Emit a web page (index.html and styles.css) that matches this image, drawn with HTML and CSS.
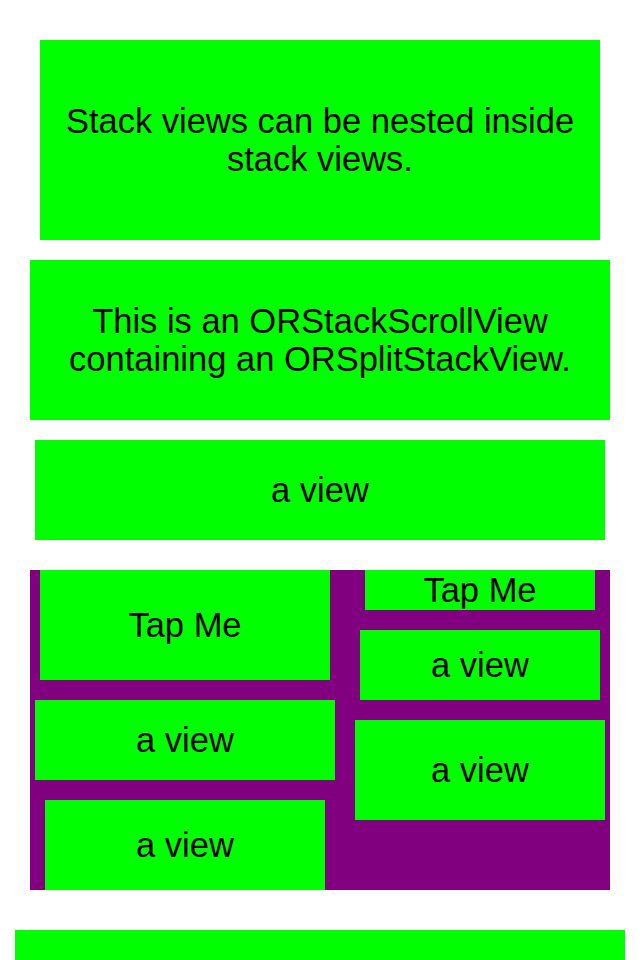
FILE: index.html
```html
<!DOCTYPE html>
<html>
<head>
<meta charset="utf-8">
<link rel="stylesheet" href="styles.css">
</head>
<body>
<div class="stack">
  <div class="box box-intro">Stack views can be nested inside<br>stack views.</div>
  <div class="box box-info">This is an ORStackScrollView<br>containing an ORSplitStackView.</div>
  <div class="box box-view">a view</div>
  <div class="split">
    <div class="col col-left">
      <div class="box l1">Tap Me</div>
      <div class="box l2">a view</div>
      <div class="box l3">a view</div>
    </div>
    <div class="col col-right">
      <div class="box r1">Tap Me</div>
      <div class="box r2">a view</div>
      <div class="box r3">a view</div>
    </div>
  </div>
  <div class="box box-bottom"></div>
</div>
</body>
</html>
```

FILE: styles.css
```css
html, body {
  margin: 0;
  padding: 0;
  background: #ffffff;
  width: 640px;
  height: 960px;
  overflow: hidden;
}
.stack {
  display: flex;
  flex-direction: column;
  padding-top: 40px;
  font-family: "Liberation Sans", Arial, Helvetica, sans-serif;
  font-size: 34.5px;
  line-height: 38px;
  color: #000000;
}
.box {
  background: #00ff00;
  display: flex;
  align-items: center;
  justify-content: center;
  text-align: center;
  flex-shrink: 0;
}
.box-intro {
  margin: 0 40px;
  height: 200px;
}
.box-info {
  margin: 20px 30px 0;
  height: 160px;
}
.box-view {
  margin: 20px 35px 0;
  height: 100px;
}
.split {
  margin: 30px 30px 0;
  height: 320px;
  background: #800080;
  display: flex;
  flex-shrink: 0;
}
.col {
  display: flex;
  flex-direction: column;
}
.col-left {
  width: 310px;
}
.col-right {
  width: 260px;
  margin-left: 10px;
}
.l1 { margin: 0 10px; height: 110px; }
.l2 { margin: 20px 5px 0; height: 80px; }
.l3 { margin: 20px 15px 0; height: 90px; }
.r1 { margin: 0 15px; height: 40px; }
.r2 { margin: 20px 10px 0; height: 70px; }
.r3 { margin: 20px 5px 0; height: 100px; }
.box-bottom {
  margin: 40px 15px 0;
  height: 60px;
}
```
